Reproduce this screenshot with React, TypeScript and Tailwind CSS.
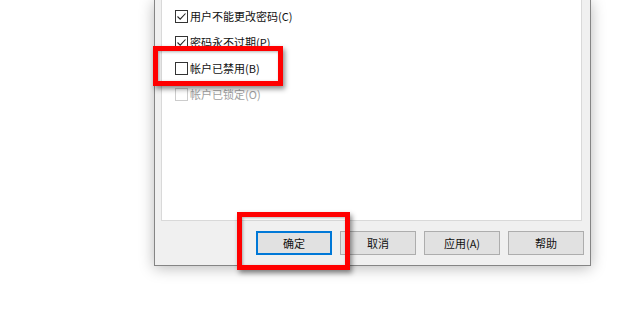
import React from "react";

const font = { fontFamily: '"Noto Sans CJK SC", "Noto Sans", sans-serif' };

function Check({ checked, disabled, label }: { checked?: boolean; disabled?: boolean; label: string }) {
  return (
    <div className="flex h-[26px] items-center">
      <div
        className={
          "flex h-[13px] w-[13px] items-center justify-center border bg-white " +
          (disabled ? "border-[#cccccc]" : "border-[#333333]")
        }
      >
        {checked && (
          <svg width="11" height="11" viewBox="0 0 11 11">
            <path d="M1.5 5.5 L4.2 8.2 L9.5 2.5" fill="none" stroke="#222" strokeWidth="1.1" />
          </svg>
        )}
      </div>
      <span className={"ml-[2px] text-[11px] leading-none " + (disabled ? "text-[#a0a0a0]" : "text-[#111]")}>
        {label}
      </span>
    </div>
  );
}

function Btn({ label, primary }: { label: string; primary?: boolean }) {
  return (
    <div
      className={
        "flex h-[24px] w-[76px] items-center justify-center bg-[#e1e1e1] text-[11px] text-[#111] " +
        (primary ? "border-2 border-[#0078d7]" : "border border-[#adadad]")
      }
    >
      {label}
    </div>
  );
}

export default function App() {
  return (
    <div className="relative h-[309px] w-[620px] overflow-hidden bg-white" style={font}>
      <div className="pl-[154px]">
        <div className="flex h-[266px] w-[437px] flex-col border-x border-b border-[#858585] bg-[#f0f0f0] shadow-[0_2px_14px_rgba(0,0,0,0.28)]">
          <div className="ml-[6px] mr-[8px] h-[221px] border-x border-b border-[#d9d9d9] bg-white pl-[13px] pt-[3px]">
            <Check checked label="用户不能更改密码(C)" />
            <Check checked label="密码永不过期(P)" />
            <Check label="帐户已禁用(B)" />
            <Check disabled label="帐户已锁定(O)" />
          </div>
          <div className="mt-[10px] flex justify-end gap-[8px] pr-[6px]">
            <Btn label="确定" primary />
            <Btn label="取消" />
            <Btn label="应用(A)" />
            <Btn label="帮助" />
          </div>
        </div>
      </div>
      <div className="absolute left-[153px] top-[46px] h-[40px] w-[130px] border-[5px] border-[#ff0000] shadow-[2px_3px_5px_rgba(0,0,0,0.45),inset_1px_1px_3px_rgba(0,0,0,0.3)]" />
      <div className="absolute left-[237px] top-[212px] h-[58px] w-[113px] border-[5px] border-[#ff0000] shadow-[2px_3px_5px_rgba(0,0,0,0.45),inset_1px_1px_3px_rgba(0,0,0,0.3)]" />
    </div>
  );
}
